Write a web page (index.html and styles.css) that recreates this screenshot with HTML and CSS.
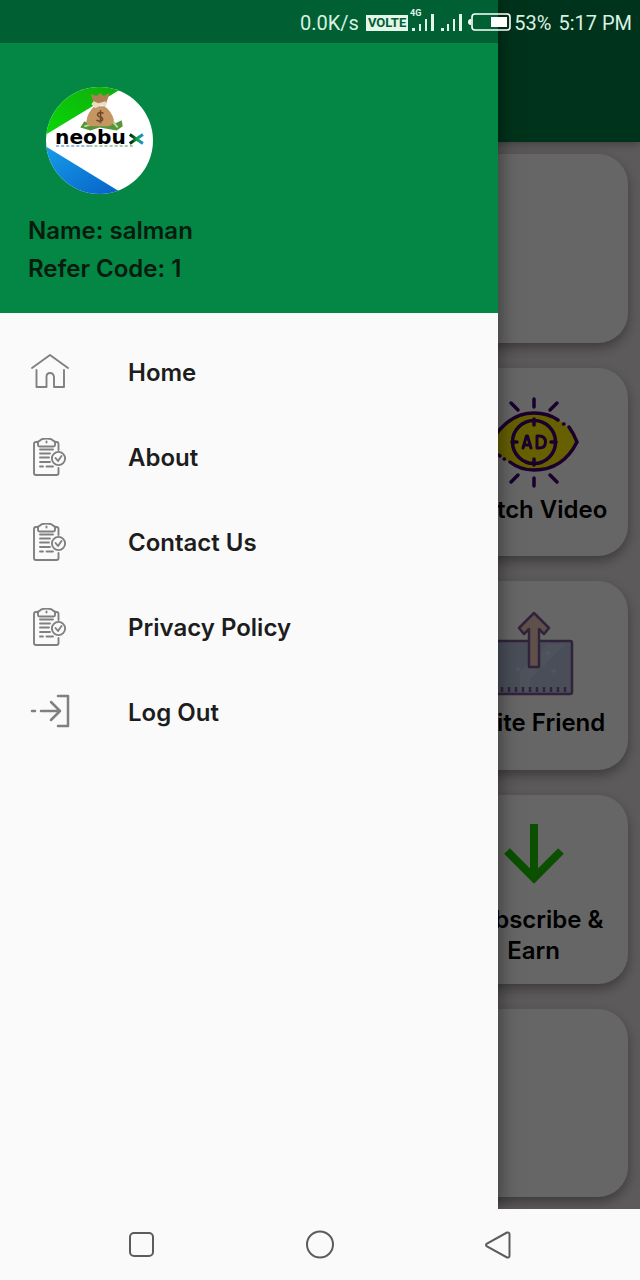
FILE: index.html
```html
<!DOCTYPE html>
<html lang="en">
<head>
<meta charset="utf-8">
<meta name="viewport" content="width=device-width, initial-scale=1">
<title>neobux</title>
<link rel="stylesheet" href="styles.css">
</head>
<body>
<svg class="defs" aria-hidden="true">
  <symbol id="clipboard" viewBox="0 0 40 40">
    <g fill="none" stroke="currentColor" stroke-width="1.900" stroke-linecap="round" stroke-linejoin="round">
      <path d="M8 4H6Q4 4 4 6V35Q4 37 6 37H26.500Q28.500 37 28.500 35V30M28.500 12V6Q28.500 4 26.500 4H25"/>
      <path d="M8 7V4.500Q8 3 9.500 3Q11 .500 16.500 .500T23.500 3Q25 3 25 4.500V7Q25 8.500 23.500 8.500H9.500Q8 8.500 8 7Z"/>
      <path d="M10 11.500H23M10 15.500H20M10 19.500H19M10 24H20M10 28.500H13M16.500 28.500H23"/>
      <circle cx="28.500" cy="20.500" r="6.600"/>
      <path d="M25.500 20L28 23L31.500 18M16.500 3.500V4.500"/>
    </g>
  </symbol>
</svg>
<div class="screen">
  <main class="app">
    <header class="app-bar"></header>
    <section class="cards">
      <div class="card"></div>
      <button class="card">
        <svg width="92" height="92" viewBox="0 0 92 92" fill="none" stroke="#3f0070" stroke-width="3.500" stroke-linecap="round">
          <path d="M3 46Q20 17 46 17C66 17 80 28 89 46C80 64 66 74 46 74Q20 74 3 46Z" fill="#fff000" stroke="none"/>
          <path d="M70 24Q60 17 46 17Q20 17 3 46L6 52M81 31Q86 38 89 46C80 64 66 74 46 74Q32 74 22 66M75.500 28H76M11 59L12 60M16 63H16.500"/>
          <path d="M46 3V11M23 7L30 14M69 7L62 14M46 82V90M23 86L30 79M69 86L62 79"/>
          <circle cx="46" cy="46" r="21.500"/>
          <path d="M46 23V29M46 63V69M24 46H29M63 46H68"/>
          <path d="M35 52L38.500 40H39.500L43 52M36 49H42M49 40V52H51Q57.500 52 57.500 46T51 40Z" stroke-width="3" stroke-linejoin="round"/>
        </svg>
        <span>Watch Video</span>
      </button>
      <button class="card">
        <svg width="92" height="92" viewBox="0 3 92 92" stroke="#7b5794" stroke-width="2.500" stroke-linejoin="round">
          <rect x="8" y="35" width="76" height="53" rx="2" fill="#b6c2dd"/>
          <path d="M42 73L77 38H60L32 66V86H42Z" fill="#c2cde2" stroke="none"/>
          <path d="M14 81V86M21 81V86M28 81V86M35 81V86M42 81V86M49 81V86M56 81V86M63 81V86M70 81V86M77 81V86" fill="none"/>
          <path d="M46 7L61 22L56 28L51 23V61H41V23L36 28L31 22Z" fill="#edcbb8"/>
          <path d="M60 44V50M57 47H63M66 62V68M63 65H69M30 61V65M28 63H32" stroke="#d6dfed" stroke-width="1"/>
        </svg>
        <span>Invite Friend</span>
      </button>
      <button class="card">
        <svg width="92" height="90" viewBox="0 0 92 90" fill="none" stroke="#1ac800" stroke-width="8">
          <path d="M46 16V69M19 43L46 70L73 43"/>
        </svg>
        <span>Subscribe &amp; Earn</span>
      </button>
      <div class="card"></div>
    </section>
  </main>
  <div class="scrim"></div>
  <aside class="drawer">
    <header class="profile">
      <svg class="avatar" viewBox="0 0 106 106" role="img" aria-label="neobux">
        <defs>
          <clipPath id="disc"><circle cx="53" cy="53" r="53"/></clipPath>
          <linearGradient id="green" x1="0" y1="1" x2="1" y2="0"><stop offset="0" stop-color="#08d808"/><stop offset="1" stop-color="#10aa0c"/></linearGradient>
          <linearGradient id="blue" x1="0" y1="0" x2="1" y2="1"><stop offset="0" stop-color="#169ce8"/><stop offset="1" stop-color="#0862c8"/></linearGradient>
          <linearGradient id="cross" gradientUnits="userSpaceOnUse" x1="84" y1="0" x2="96" y2="0"><stop offset="0.100" stop-color="#06351a"/><stop offset="0.500" stop-color="#12a53a"/><stop offset="1" stop-color="#168ee0"/></linearGradient>
        </defs>
        <g clip-path="url(#disc)">
          <path d="M0 0H106V106H0Z" fill="#fff"/>
          <path d="M0 0H80L71 4L0 47Z" fill="url(#green)"/>
          <path d="M0 59L72 103V106H0Z" fill="url(#blue)"/>
        </g>
        <path d="M34 40L38 34L44 37L64 31L69 36L75 33L76 39L70 43L53 40L44 43Z" fill="#559638"/>
        <path d="M57 37L65 33L71 40M38 39L45 37" fill="none" stroke="#bbd99b" stroke-width="2"/>
        <path d="M48 19Q41 25 40 34Q40 39 47 39H61Q68 38 67 32Q65 24 58 19Z" fill="#c59662"/>
        <path d="M48 17L44 7L50 9L54 6L57 9L63 6L59 18Z" fill="#ad8052"/>
        <path d="M47 14L52 16L59 14L60 19L54 18L49 21L45 17Z" fill="#e9ddc8"/>
        <path d="M57 26Q51 24 51 28Q52 30 55 30Q58 33 53 34L50 33M54 23V36" fill="none" stroke="#6b462d" stroke-width="1.500"/>
        <text class="brand" x="9" y="56">neobu</text>
        <path d="M83 47L96 56M96 47L83 56" stroke="url(#cross)" stroke-width="3"/>
        <path d="M10 58.500H43" stroke="#2878c8" stroke-width="1" stroke-dasharray="3 2"/>
        <path d="M43 58.500H86" stroke="#44a052" stroke-width="1" stroke-dasharray="3 2"/>
      </svg>
      <p>Name: salman</p>
      <p>Refer Code: 1</p>
    </header>
    <nav class="menu">
      <a href="#"><svg class="icon" viewBox="0 0 40 40" fill="none" stroke="currentColor" stroke-width="1.900" stroke-linecap="round" stroke-linejoin="round"><path d="M2 15L20 2L38 15M6.500 17V34H16.500V24Q16.500 20 20 20T24 24V34H34V17"/></svg>Home</a>
      <a href="#"><svg class="icon"><use href="#clipboard"/></svg>About</a>
      <a href="#"><svg class="icon"><use href="#clipboard"/></svg>Contact Us</a>
      <a href="#"><svg class="icon"><use href="#clipboard"/></svg>Privacy Policy</a>
      <a href="#"><svg class="icon" viewBox="0 0 40 40" fill="none" stroke="currentColor" stroke-width="2.500" stroke-linecap="round" stroke-linejoin="round"><path d="M2 18H5M11 18H30M21 9L30 18L21 27M28 3H38V33H28"/></svg>Log Out</a>
    </nav>
  </aside>
  <div class="status">
    <span>0.0K/s</span>
    <span class="volte">VOLTE</span>
    <svg width="54" height="28" viewBox="0 0 54 28" fill="#e4f5e9"><text class="network" x="1" y="7">4G</text><path d="M3 19h3v3h-3zM10 15h2v7h-2zM16 10h2v12h-2zM22 5h3v17h-3zM32 19h3v3h-3zM38 15h2v7h-2zM44 10h2v12h-2zM50 5h3v17h-3z"/></svg>
    <svg class="battery" width="43" height="22" viewBox="0 0 43 22"><rect x="4" y="2" width="38" height="16" rx="3" fill="none" stroke="#fff" stroke-width="1.600"/><path d="M23 5H39V15H23ZM3 7V13Q0 13 0 10T3 7Z" fill="#fff"/></svg>
    <span>53%</span>
    <time>5:17 PM</time>
  </div>
</div>
<nav class="system">
  <button aria-label="Recent apps"><svg viewBox="0 0 30 30"><rect x="3" y="3" width="23" height="23" rx="4"/></svg></button>
  <button aria-label="Home screen"><svg viewBox="0 0 30 30"><circle cx="15" cy="14.500" r="13"/></svg></button>
  <button aria-label="Back"><svg viewBox="0 0 30 30"><path d="M24 2.500L4 13.500Q2 15 4 16.500L24 27.500Q26.500 28 26.500 25.500V4.500Q26.500 2 24 2.500Z"/></svg></button>
</nav>
</body>
</html>
```
FILE: styles.css
```css
* {
  box-sizing: border-box;
}

body {
  margin: 0;
  min-height: 100vh;
  display: flex;
  flex-direction: column;
  background: #fafafa;
  color: #1d1d1d;
  font-family: Inter, "Liberation Sans", sans-serif;
  font-size: 24px;
  font-weight: 600;
  line-height: 31px;
}

button {
  border: 0;
  padding: 0;
  background: none;
  font: inherit;
  color: inherit;
}

.defs {
  position: absolute;
  width: 0;
  height: 0;
}

.screen {
  position: relative;
  flex: 1;
  overflow: hidden;
  background: #e8e1e3;
}

.app-bar {
  position: relative;
  height: 142px;
  background: #008044;
  box-shadow: 0 2px 8px rgba(0, 0, 0, 0.3);
}

.cards {
  display: grid;
  grid-template-columns: repeat(3, 1fr);
  gap: 25px;
  padding: 12px;
}

.card {
  grid-column: 3;
  aspect-ratio: 1;
  display: flex;
  flex-direction: column;
  align-items: center;
  justify-content: center;
  gap: 6px;
  padding: 0 12px 4px;
  border-radius: 30px;
  background: #fff;
  box-shadow: 0 5px 12px rgba(0, 0, 0, 0.35);
  color: #000;
  text-align: center;
}

.card svg {
  flex: none;
}

.card span {
  margin: 0 -12px;
}

.scrim {
  position: absolute;
  inset: 0;
  background: rgba(0, 0, 0, 0.6);
}

.drawer {
  position: absolute;
  inset: 0 auto 0 0;
  width: 77.8%;
  background: #fafafa;
  box-shadow: 0 0 20px rgba(0, 0, 0, 0.5);
}

.profile {
  padding: 44px 28px 29px;
  border-top: 43px solid #006034;
  background: #048645;
  color: #071b0e;
}

.profile p {
  margin: 0 0 7px;
}

.profile p:last-child {
  margin: 0;
}

.avatar {
  display: block;
  width: 107px;
  height: 107px;
  margin: 0 18px 21px;
}

.brand {
  font: 700 20px "DejaVu Sans", sans-serif;
  fill: #000;
}

.menu {
  padding: 17px 30px;
}

.menu a {
  display: flex;
  align-items: center;
  gap: 58px;
  height: 85px;
  color: inherit;
  text-decoration: none;
}

.icon {
  flex: none;
  width: 40px;
  height: 40px;
  color: #808080;
}

.status {
  position: absolute;
  inset: 0 0 auto 0;
  height: 43px;
  display: flex;
  align-items: center;
  justify-content: flex-end;
  padding: 2px 8px 0 0;
  color: #d9f2e1;
  font: 400 20px Roboto, sans-serif;
}

.status time {
  margin-left: 7px;
}

.volte {
  margin: 0 1px 0 7px;
  padding: 0 2px;
  background: #e4f5e9;
  color: #006034;
  font: 700 13px/16px Roboto, sans-serif;
}

.network {
  font: 700 9px Roboto, sans-serif;
}

.battery {
  margin: 0 3px 0 5px;
}

.system {
  display: grid;
  grid-template-columns: repeat(3, 1fr);
  align-items: center;
  height: 71px;
  padding: 0 53px;
}

.system button {
  height: 48px;
}

.system svg {
  display: block;
  width: 30px;
  height: 30px;
  margin: 0 auto;
  fill: none;
  stroke: #5c5c5c;
  stroke-width: 2;
}
```
